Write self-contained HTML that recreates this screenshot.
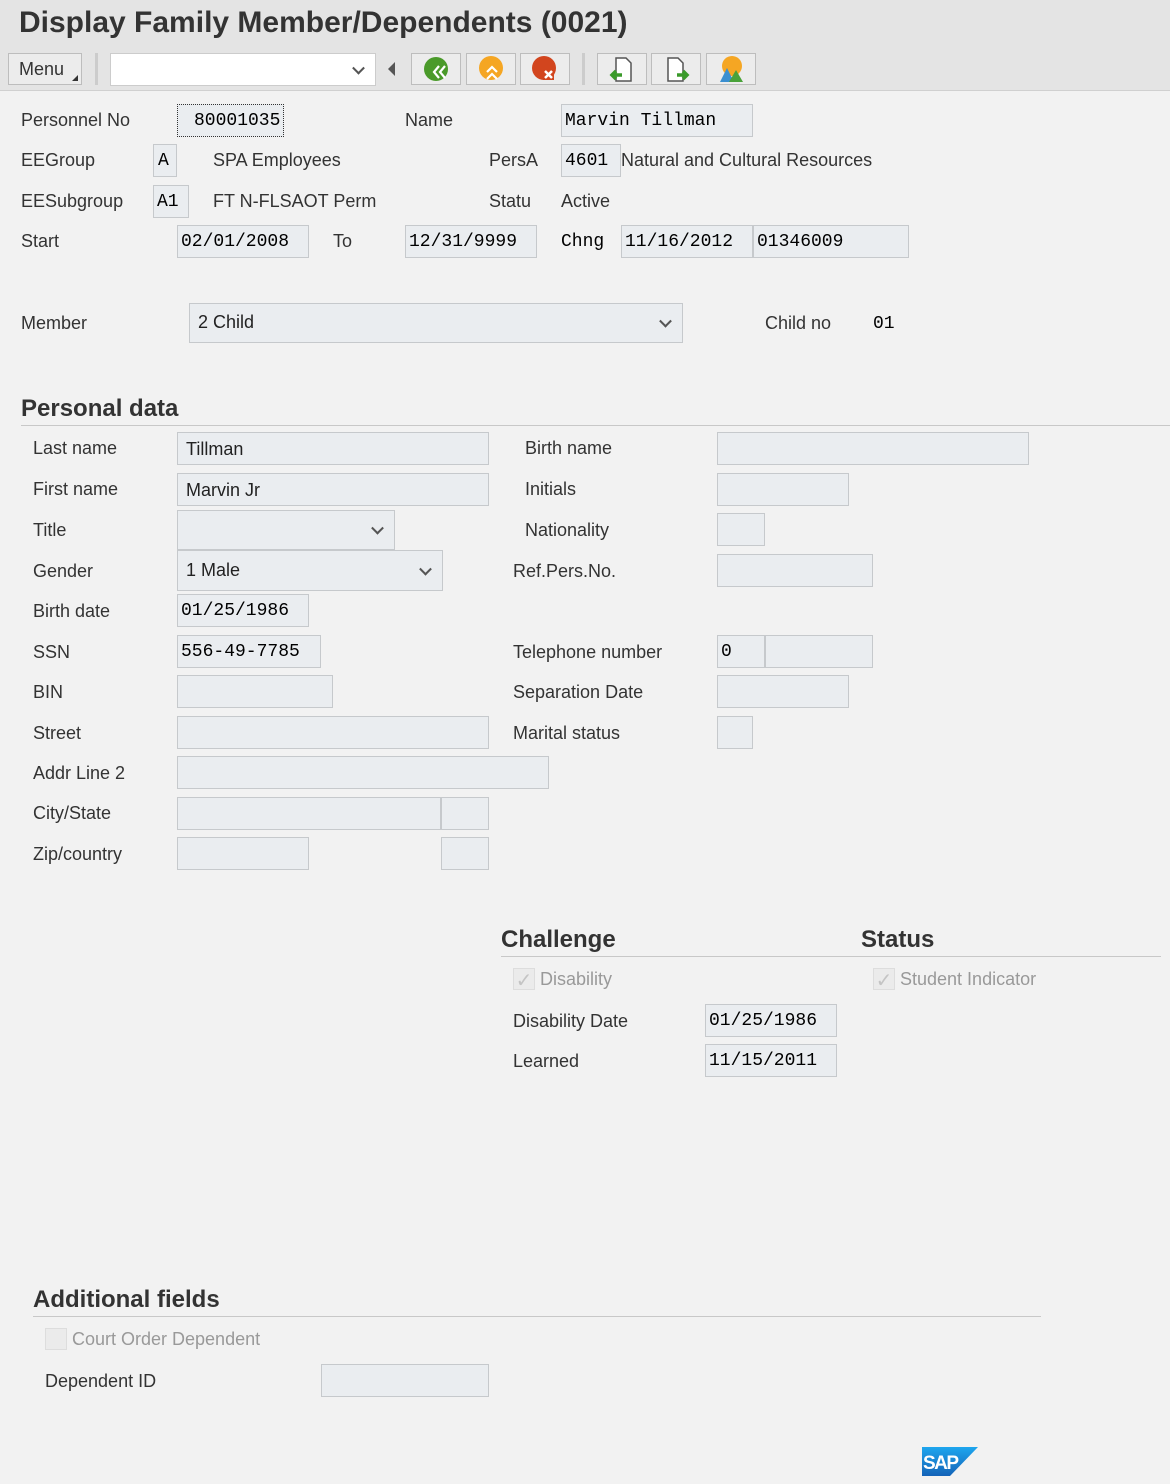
<!DOCTYPE html>
<html><head><meta charset="utf-8"><style>
*{margin:0;padding:0;box-sizing:border-box}
body{width:1170px;height:1484px;background:#f2f2f2;font-family:"Liberation Sans",Arial,sans-serif;color:#333;position:relative;overflow:hidden}
.hdr{position:absolute;left:0;top:0;width:1170px;height:91px;background:#e4e4e4;border-bottom:1px solid #d0d0d0}
.title{position:absolute;left:19px;top:6px;font-size:30px;font-weight:bold;color:#333}
.l{position:absolute;font-size:18px;color:#333;line-height:33px;white-space:nowrap}
.f{position:absolute;height:33px;border:1px solid #c6c9cc;background:#eaedf0;font-size:18px;line-height:32px;padding-left:8px;color:#222;white-space:nowrap}
.m{font-family:"Liberation Mono",monospace;font-size:18px;padding-left:3px;color:#000}
.dd::after{content:"";position:absolute;right:12px;top:50%;width:7px;height:7px;border-right:2px solid #555;border-bottom:2px solid #555;transform:translateY(-70%) rotate(45deg)}
.h{position:absolute;font-size:24px;font-weight:bold;color:#333}
.line{position:absolute;height:1px;background:#c8c8c8}
.btn{position:absolute;top:53px;width:50px;height:32px;border:1px solid #bdbdbd;background:#ececec}
.sep{position:absolute;top:53px;width:3px;height:32px;background:#ccc}
.cb{position:absolute;width:22px;height:22px;border:1px solid #ddd;background:#ebebeb;color:#c4c4c4;font-size:20px;line-height:22px;text-align:center;font-family:"DejaVu Sans",sans-serif}
.dis{color:#999}
</style></head><body>
<div class="hdr"></div>
<div class="title">Display Family Member/Dependents (0021)</div>
<div style="position:absolute;left:8px;top:53px;width:74px;height:32px;border:1px solid #bdbdbd;background:#ececec;font-size:18px;line-height:30px;padding-left:10px">Menu<span style="position:absolute;right:3px;bottom:3px;width:0;height:0;border-left:6px solid transparent;border-bottom:6px solid #333"></span></div>
<div class="sep" style="left:95px"></div>
<div class="dd" style="position:absolute;left:110px;top:53px;width:266px;height:33px;background:#fff;border:1px solid #ccc"></div>
<div style="position:absolute;left:388px;top:62px;width:0;height:0;border-top:7px solid transparent;border-bottom:7px solid transparent;border-right:7px solid #555"></div>
<div class="btn" style="left:411px"><svg width="48" height="30"><circle cx="24" cy="15" r="12" fill="#4a9a2a"/><path d="M27 12l-5 6 5 6M33 12l-5 6 5 6" stroke="#fff" stroke-width="2.2" fill="none"/></svg></div>
<div class="btn" style="left:466px"><svg width="48" height="30"><circle cx="24" cy="14" r="12" fill="#f5a623"/><path d="M20 18l5-5 5 5M20 25l5-5 5 5" stroke="#fff" stroke-width="2.2" fill="none"/></svg></div>
<div class="btn" style="left:520px"><svg width="48" height="30"><circle cx="23" cy="14" r="12" fill="#d2451e"/><rect x="22" y="15" width="11" height="11" fill="#d2451e"/><path d="M24 17l7 7M31 17l-7 7" stroke="#fff" stroke-width="2.5"/></svg></div>
<div class="sep" style="left:582px"></div>
<div class="btn" style="left:597px"><svg width="48" height="30"><path d="M18 4h10l5 5v18h-15z" fill="#fff" stroke="#555" stroke-width="1.5"/><path d="M24 21h-9M18 17l-4 4 4 4" stroke="#3a9a2a" stroke-width="3.5" fill="none"/></svg></div>
<div class="btn" style="left:651px"><svg width="48" height="30"><path d="M16 4h10l5 5v18h-15z" fill="#fff" stroke="#555" stroke-width="1.5"/><path d="M25 21h9M31 17l4 4-4 4" stroke="#3a9a2a" stroke-width="3.5" fill="none"/></svg></div>
<div class="btn" style="left:706px"><svg width="48" height="30"><circle cx="25" cy="12" r="10" fill="#f5a623"/><path d="M13 28l7-14 7 14z" fill="#3b8fd0"/><path d="M22 28l7-12 7 12z" fill="#49a23a"/></svg></div>

<div class="l" style="left:21px;top:104px">Personnel No</div>
<div class="f m" style="left:177px;top:104px;width:107px;border:1px dotted #333;padding-left:16px">80001035</div>
<div class="l" style="left:405px;top:104px">Name</div>
<div class="f m" style="left:561px;top:104px;width:192px">Marvin Tillman</div>

<div class="l" style="left:21px;top:144px">EEGroup</div>
<div class="f m" style="left:153px;top:144px;width:24px;padding-left:4px">A</div>
<div class="l" style="left:213px;top:144px">SPA Employees</div>
<div class="l" style="left:489px;top:144px">PersA</div>
<div class="f m" style="left:561px;top:144px;width:60px">4601</div>
<div class="l" style="left:621px;top:144px">Natural and Cultural Resources</div>

<div class="l" style="left:21px;top:185px">EESubgroup</div>
<div class="f m" style="left:153px;top:185px;width:36px">A1</div>
<div class="l" style="left:213px;top:185px">FT N-FLSAOT Perm</div>
<div class="l" style="left:489px;top:185px">Statu</div>
<div class="l" style="left:561px;top:185px">Active</div>

<div class="l" style="left:21px;top:225px">Start</div>
<div class="f m" style="left:177px;top:225px;width:132px">02/01/2008</div>
<div class="l" style="left:333px;top:225px">To</div>
<div class="f m" style="left:405px;top:225px;width:132px">12/31/9999</div>
<div class="l m" style="left:558px;top:226px">Chng</div>
<div class="f m" style="left:621px;top:225px;width:132px">11/16/2012</div>
<div class="f m" style="left:753px;top:225px;width:156px">01346009</div>

<div class="l" style="left:21px;top:307px">Member</div>
<div class="f dd" style="left:189px;top:303px;width:494px;height:40px;line-height:37px">2 Child</div>
<div class="l" style="left:765px;top:307px">Child no</div>
<div class="l m" style="left:870px;top:308px">01</div>

<div class="h" style="left:21px;top:395px">Personal data</div>
<div class="line" style="left:21px;top:425px;width:1149px"></div>

<div class="l" style="left:33px;top:432px">Last name</div>
<div class="f" style="left:177px;top:432px;width:312px">Tillman</div>
<div class="l" style="left:525px;top:432px">Birth name</div>
<div class="f" style="left:717px;top:432px;width:312px"></div>

<div class="l" style="left:33px;top:473px">First name</div>
<div class="f" style="left:177px;top:473px;width:312px">Marvin Jr</div>
<div class="l" style="left:525px;top:473px">Initials</div>
<div class="f" style="left:717px;top:473px;width:132px"></div>

<div class="l" style="left:33px;top:514px">Title</div>
<div class="f dd" style="left:177px;top:510px;width:218px;height:40px"></div>
<div class="l" style="left:525px;top:514px">Nationality</div>
<div class="f" style="left:717px;top:513px;width:48px"></div>

<div class="l" style="left:33px;top:555px">Gender</div>
<div class="f dd" style="left:177px;top:550px;width:266px;height:41px;line-height:39px">1 Male</div>
<div class="l" style="left:513px;top:555px">Ref.Pers.No.</div>
<div class="f" style="left:717px;top:554px;width:156px"></div>

<div class="l" style="left:33px;top:595px">Birth date</div>
<div class="f m" style="left:177px;top:594px;width:132px">01/25/1986</div>

<div class="l" style="left:33px;top:636px">SSN</div>
<div class="f m" style="left:177px;top:635px;width:144px">556-49-7785</div>
<div class="l" style="left:513px;top:636px">Telephone number</div>
<div class="f m" style="left:717px;top:635px;width:48px">0</div>
<div class="f" style="left:765px;top:635px;width:108px"></div>

<div class="l" style="left:33px;top:676px">BIN</div>
<div class="f" style="left:177px;top:675px;width:156px"></div>
<div class="l" style="left:513px;top:676px">Separation Date</div>
<div class="f" style="left:717px;top:675px;width:132px"></div>

<div class="l" style="left:33px;top:717px">Street</div>
<div class="f" style="left:177px;top:716px;width:312px"></div>
<div class="l" style="left:513px;top:717px">Marital status</div>
<div class="f" style="left:717px;top:716px;width:36px"></div>

<div class="l" style="left:33px;top:757px">Addr Line 2</div>
<div class="f" style="left:177px;top:756px;width:372px"></div>

<div class="l" style="left:33px;top:797px">City/State</div>
<div class="f" style="left:177px;top:797px;width:264px"></div>
<div class="f" style="left:441px;top:797px;width:48px"></div>

<div class="l" style="left:33px;top:838px">Zip/country</div>
<div class="f" style="left:177px;top:837px;width:132px"></div>
<div class="f" style="left:441px;top:837px;width:48px"></div>

<div class="h" style="left:501px;top:926px">Challenge</div>
<div class="h" style="left:861px;top:926px">Status</div>
<div class="line" style="left:501px;top:956px;width:660px"></div>
<div class="cb" style="left:513px;top:968px">✓</div>
<div class="l dis" style="left:540px;top:963px">Disability</div>
<div class="cb" style="left:873px;top:968px">✓</div>
<div class="l dis" style="left:900px;top:963px">Student Indicator</div>
<div class="l" style="left:513px;top:1005px">Disability Date</div>
<div class="f m" style="left:705px;top:1004px;width:132px">01/25/1986</div>
<div class="l" style="left:513px;top:1045px">Learned</div>
<div class="f m" style="left:705px;top:1044px;width:132px">11/15/2011</div>

<div class="h" style="left:33px;top:1286px">Additional fields</div>
<div class="line" style="left:33px;top:1316px;width:1008px"></div>
<div class="cb" style="left:45px;top:1328px"></div>
<div class="l dis" style="left:72px;top:1323px">Court Order Dependent</div>
<div class="l" style="left:45px;top:1365px">Dependent ID</div>
<div class="f" style="left:321px;top:1364px;width:168px"></div>

<svg style="position:absolute;left:922px;top:1447px" width="56" height="29"><defs><linearGradient id="g" x1="0" y1="0" x2="0" y2="1"><stop offset="0" stop-color="#1ea6ee"/><stop offset="1" stop-color="#1463b8"/></linearGradient></defs><path d="M0 0h56L28 29H0z" fill="url(#g)"/><text x="1" y="22" font-family="Liberation Sans" font-weight="bold" font-size="19" fill="#fff" letter-spacing="-1.5">SAP</text></svg>
</body></html>
